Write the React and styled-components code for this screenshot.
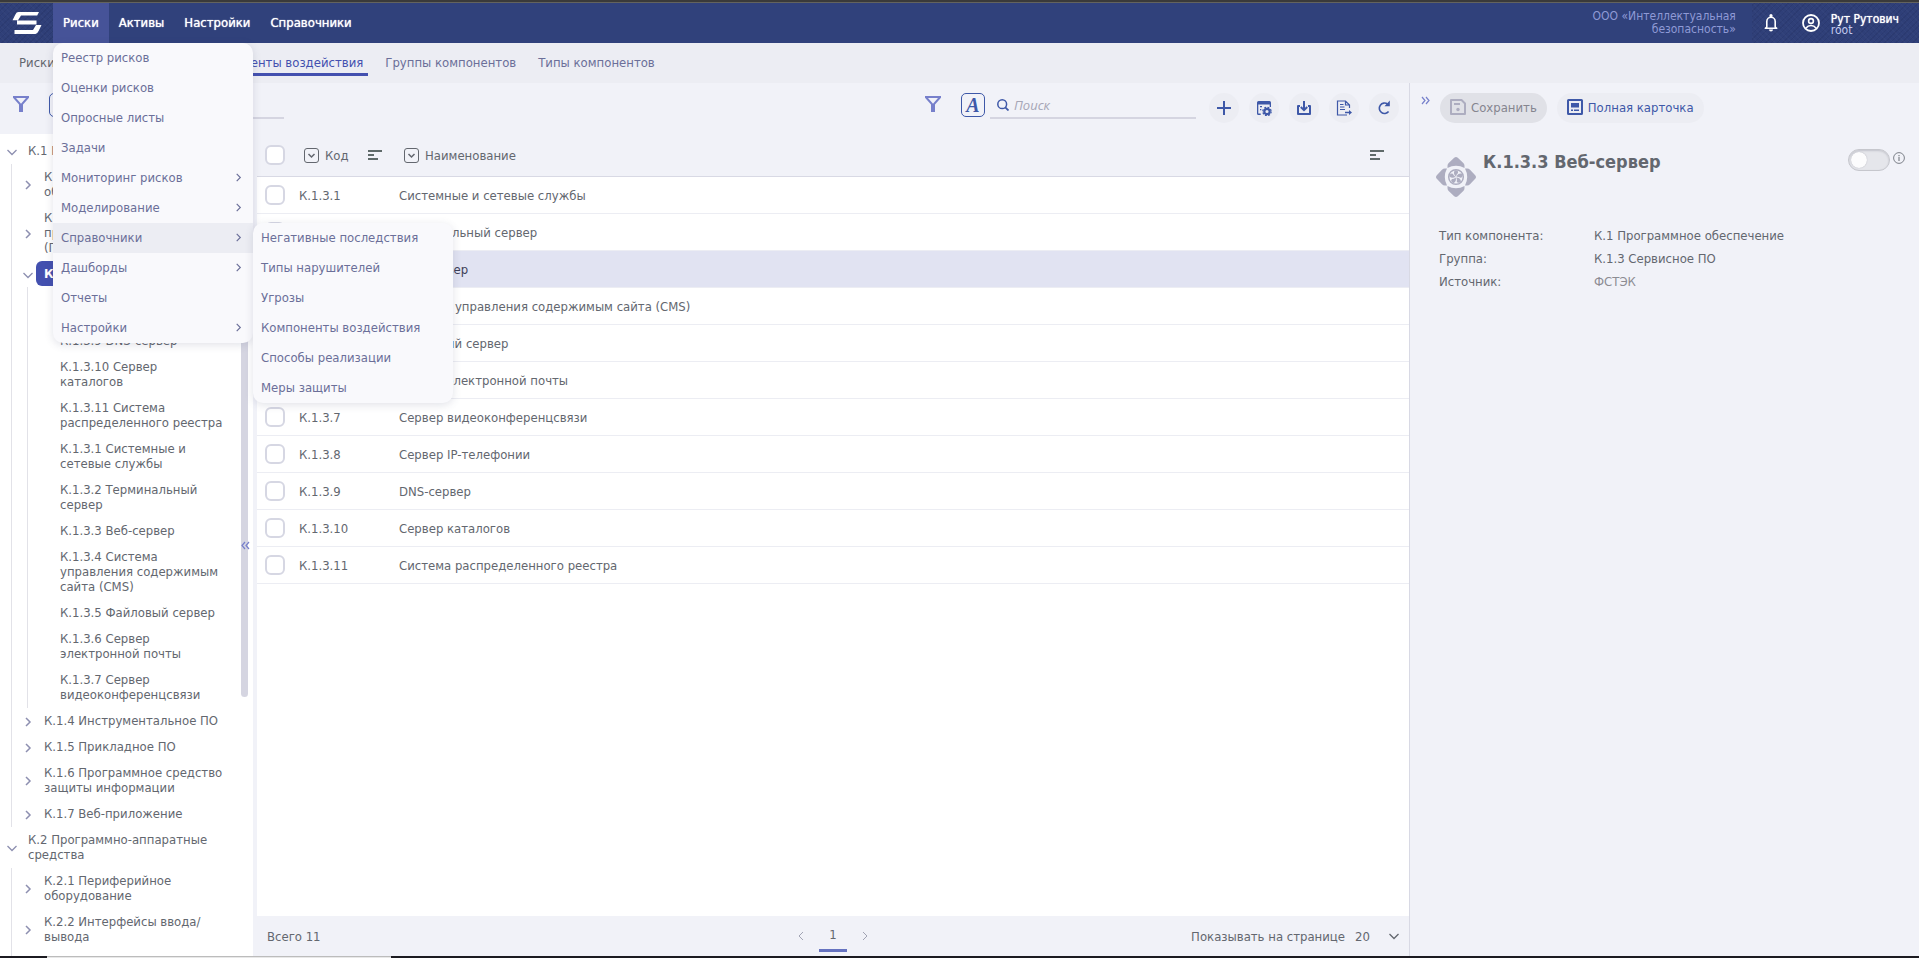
import React from 'react';
import styled, { createGlobalStyle, css } from 'styled-components';

const c = {
  header: '#30417b',
  headerActive: '#465398',
  panel: '#f1f2f8',
  bar: '#ecedf3',
  text: '#63676f',
  muted: '#6b6f99',
  accent: '#4350af',
  icon: '#3e58a8',
  soft: '#7780cb',
  line: '#d8d9e4',
};

const Global = createGlobalStyle`
  *, *::before, *::after { box-sizing: border-box; }
  body {
    margin: 0;
    font-family: "DejaVu Sans Condensed", "Liberation Sans", sans-serif;
    font-size: 13px;
    line-height: 15px;
    color: ${c.text};
    background: ${c.panel};
  }
  button, input, select { font: inherit; color: inherit; }
  ul, dl, dd, h1 { margin: 0; padding: 0; }
  ul { list-style: none; }
  a { color: inherit; text-decoration: none; }
`;

const Page = styled.div`
  display: flex;
  flex-direction: column;
  height: 100vh;
  overflow: hidden;
`;

const TopEdge = styled.div`
  flex: none;
  height: 3px;
  background: #3a3a3a;
  border-bottom: 1px solid #63635e;
`;

const BottomEdge = styled.div`
  flex: none;
  display: grid;
  grid-template-columns: 47px 344px 1fr;
  height: 2px;
  background: #1c1b21;
`;

const EdgeTab = styled.span`
  grid-column: 2;
  background: #e8e8e8;
  border-top: 1px solid #bcbcbc;
`;

/* ---------- header ---------- */

const pattern = css`
  background-color: #2f3f78;
  background-image:
    repeating-linear-gradient(45deg, rgba(255, 255, 255, 0.02) 0 1px, transparent 1px 4px),
    repeating-linear-gradient(-45deg, rgba(10, 15, 50, 0.1) 0 1px, transparent 1px 4px);
`;

const Header = styled.header`
  flex: none;
  display: flex;
  height: 40px;
  background: ${c.header};
  color: #fff;
`;

const Logo = styled.a`
  display: flex;
  align-items: center;
  justify-content: center;
  width: 53px;
  ${pattern}
`;

const Nav = styled.ul`
  display: flex;
  flex: 1;
`;

const NavItem = styled.li`
  position: relative;
  background: ${(p) => (p.$active ? c.headerActive : 'transparent')};
`;

const NavLink = styled.a`
  display: block;
  padding: 0 10px;
  line-height: 40px;
  text-shadow: 0 0 1px #fff;
`;

const Menu = styled.ul`
  position: absolute;
  z-index: 10;
  top: 100%;
  left: 0;
  width: 200px;
  background: #f9f9fc;
  border-radius: 10px;
  box-shadow: 0 2px 8px rgba(70, 75, 110, 0.16);
  color: ${c.muted};
`;

const SubMenu = styled(Menu)`
  top: 0;
  left: 100%;
`;

const MenuItem = styled.li`
  position: relative;
  background: ${(p) => (p.$open ? c.bar : 'transparent')};
`;

const MenuLink = styled.a`
  display: flex;
  align-items: center;
  justify-content: space-between;
  height: 30px;
  padding: 0 10px 2px 8px;
`;

const Org = styled.div`
  align-self: center;
  width: 160px;
  margin-right: 16px;
  font-size: 12px;
  line-height: 13px;
  text-align: right;
  color: #8f9ad6;
`;

const Account = styled.div`
  display: flex;
  align-items: center;
  padding: 0 20px 0 12px;
  ${pattern}
`;

const HeaderButton = styled.button`
  display: flex;
  padding: 0;
  margin-right: ${(p) => p.$gap}px;
  border: 0;
  background: none;
  color: #fff;
`;

const User = styled.div`
  padding-top: 4px;
  font-size: 12px;
  line-height: 11px;
  white-space: nowrap;
`;

const UserName = styled.div`
  text-shadow: 0 0 1px #fff;
`;

const UserLogin = styled.div`
  color: #c3caf0;
`;

/* ---------- tabs ---------- */

const TabBar = styled.nav`
  flex: none;
  display: flex;
  align-items: flex-start;
  gap: 12px;
  height: 40px;
  padding-left: 19px;
  background: ${c.bar};
`;

const Crumb = styled.a`
  width: 168px;
  padding-top: 10px;
  line-height: 20px;
`;

const Tab = styled.a`
  padding: 10px 5px 0;
  line-height: 20px;
  white-space: nowrap;
  color: ${(p) => (p.$active ? c.accent : c.muted)};
  border-bottom: 3px solid ${(p) => (p.$active ? c.accent : 'transparent')};
`;

/* ---------- body ---------- */

const Body = styled.div`
  flex: 1;
  display: flex;
  min-height: 0;
`;

const Sidebar = styled.aside`
  position: relative;
  z-index: 1;
  flex: none;
  display: flex;
  flex-direction: column;
  width: 253px;
`;

const Toolbar = styled.div`
  flex: none;
  display: flex;
  align-items: flex-start;
  justify-content: ${(p) => (p.$end ? 'flex-end' : 'flex-start')};
  height: 51px;
  padding: 10px 10px 0 9px;
  background: ${c.panel};
`;

const FilterButton = styled.button`
  flex: none;
  display: flex;
  align-items: center;
  justify-content: center;
  width: 24px;
  height: 22px;
  margin-right: 16px;
  padding: 0;
  border: 0;
  background: none;
  color: ${c.soft};
`;

const CaseButton = styled.button`
  flex: none;
  width: 24px;
  height: 24px;
  padding: 0;
  border: 1px solid ${c.icon};
  border-radius: 5px;
  background: none;
  color: ${c.icon};
  font: italic bold 20px/20px "Liberation Serif", serif;
`;

const SearchBox = styled.label`
  flex: none;
  display: flex;
  align-items: center;
  gap: 5px;
  width: 206px;
  height: 26px;
  margin-left: 5px;
  padding-left: 7px;
  border-bottom: 2px solid #d5d5e1;
  color: ${c.icon};
`;

const SearchInput = styled.input`
  flex: 1;
  min-width: 0;
  padding: 0;
  border: 0;
  outline: 0;
  background: none;
  font-family: "Open Sans", sans-serif;
  font-style: italic;
  &::placeholder { color: #a6a6b6; opacity: 1; }
`;

const Actions = styled.div`
  display: flex;
  gap: 10px;
  margin-left: 13px;
`;

const RoundButton = styled.button`
  display: flex;
  align-items: center;
  justify-content: center;
  width: 30px;
  height: 30px;
  padding: 0;
  border: 0;
  border-radius: 50%;
  background: ${c.bar};
  color: ${c.icon};
`;

const Tree = styled.ul`
  flex: 1;
  min-height: 0;
  overflow: hidden;
  padding: 4px 17px 0 0;
  background: #fff;
`;

const Branch = styled.ul`
  margin-left: 11px;
  padding-left: 4px;
  border-left: 1px solid #e2e2e8;
`;

const TreeRow = styled.div`
  display: flex;
  align-items: center;
  padding-bottom: 1px;
`;

const TreeToggle = styled.button`
  flex: none;
  display: flex;
  justify-content: center;
  width: 20px;
  padding: 2px 0 0 3px;
  border: 0;
  background: none;
  color: #8d8fb0;
`;

const TreeSpacer = styled.span`
  flex: none;
  width: 20px;
`;

const TreeLabel = styled.a`
  flex: 1;
  padding: 5px 8px;
  border-radius: 6px;
  white-space: pre-line;
  ${(p) => p.$selected && css`
    background: ${c.accent};
    color: #fff;
    font-weight: bold;
    white-space: nowrap;
  `}
`;

const Scrollbar = styled.span`
  position: absolute;
  top: 120px;
  right: 5px;
  width: 7px;
  height: 494px;
  border-radius: 4px;
  background: #d5d5e1;
`;

const CollapseButton = styled.button`
  position: absolute;
  top: 458px;
  right: 3px;
  display: flex;
  padding: 0;
  border: 0;
  background: none;
  color: ${c.soft};
`;

const Main = styled.main`
  flex: 1;
  display: flex;
  flex-direction: column;
  min-width: 0;
  padding-left: 4px;
  background: ${c.panel};
`;

const TableArea = styled.div`
  flex: 1;
  min-height: 0;
  overflow: hidden;
  background: #fff;
`;

const Table = styled.table`
  width: 100%;
  border-collapse: separate;
  border-spacing: 0;
  table-layout: fixed;
`;

const Col = styled.col`
  width: ${(p) => p.$w};
`;

const Th = styled.th`
  height: 43px;
  padding: 0 25px 0 5px;
  border-bottom: 1px solid ${c.line};
  background: ${c.panel};
  font-weight: normal;
  text-align: left;
`;

const HeadCell = styled.div`
  display: flex;
  align-items: center;
  gap: 6px;
`;

const SortButton = styled.button`
  display: flex;
  margin-left: auto;
  padding: 0;
  border: 0;
  background: none;
  color: #5f6a6a;
`;

const CodeTh = styled(Th)`
  padding-right: 17px;
`;

const Tr = styled.tr`
  background: ${(p) => (p.$selected ? '#e1e3f2' : '#fff')};
  color: ${(p) => (p.$selected ? '#3d4058' : 'inherit')};
`;

const Td = styled.td`
  height: 37px;
  padding: 0;
  border-bottom: 1px solid ${c.bar};
`;

const checkCell = css`
  padding: 0 0 0 8px;
  vertical-align: middle;
`;

const CheckTh = styled(Th)`
  ${checkCell}
`;

const CheckTd = styled(Td)`
  ${checkCell}
`;

const Check = styled.input.attrs({ type: 'checkbox' })`
  appearance: none;
  display: block;
  width: 20px;
  height: 20px;
  margin: 0;
  border: 2px solid #d6d7e3;
  border-radius: 6px;
  background: #fff;
`;

const Footer = styled.footer`
  flex: none;
  display: grid;
  grid-template-columns: 1fr auto 1fr;
  align-items: center;
  height: 40px;
  padding: 0 10px;
`;

const Pager = styled.nav`
  display: flex;
  align-items: center;
  gap: 13px;
`;

const PageStep = styled.button`
  display: flex;
  padding: 0;
  border: 0;
  background: none;
  color: #a2a4b4;
`;

const PageNumber = styled.button`
  width: 28px;
  height: 31px;
  padding: 0;
  border: 0;
  border-bottom: 3px solid #6673c0;
  background: none;
`;

const PageSize = styled.label`
  display: flex;
  align-items: center;
  justify-content: flex-end;
  gap: 10px;
`;

const SizeSelect = styled.select`
  appearance: none;
  width: 24px;
  padding: 0;
  border: 0;
  background: none;
`;

/* ---------- details ---------- */

const Details = styled.section`
  flex: none;
  width: 510px;
  padding: 10px 14px 0 11px;
  border-left: 1px solid ${c.line};
  background: ${c.panel};
`;

const DetailsBar = styled.div`
  display: flex;
  align-items: flex-start;
  gap: 10px;
`;

const ExpandButton = styled.button`
  display: flex;
  width: 9px;
  padding: 3px 0 0;
  border: 0;
  background: none;
  color: ${c.soft};
`;

const PillButton = styled.button`
  display: flex;
  align-items: center;
  gap: 5px;
  height: 30px;
  padding: 0 10px 2px;
  border: 0;
  border-radius: 15px;
  background: ${c.bar};
  color: ${c.icon};
  white-space: nowrap;
  &:disabled { background: #e0e1e7; color: #85858f; }
`;

const Card = styled.div`
  display: flex;
  align-items: flex-start;
  gap: 7px;
  padding: 26px 0 0 15px;
`;

const Emblem = styled.svg`
  flex: none;
  margin-top: 8px;
  color: #adadc0;
`;

const Title = styled.h1`
  flex: 1;
  padding-top: 2px;
  font-size: 18px;
  line-height: 22px;
`;

const SwitchBox = styled.div`
  display: flex;
  gap: 3px;
`;

const Switch = styled.input.attrs({ type: 'checkbox', role: 'switch' })`
  appearance: none;
  width: 42px;
  height: 22px;
  margin: 0;
  padding: 2px;
  border: 1px solid #c6c7cd;
  border-radius: 11px;
  background: #e5e6eb;
  box-shadow: inset 0 1px 2px rgba(60, 60, 80, 0.2);
  &::before {
    content: '';
    display: block;
    width: 16px;
    height: 16px;
    border-radius: 50%;
    background: #fcfcfd;
    box-shadow: 0 0 1px rgba(60, 60, 80, 0.4);
  }
`;

const Info = styled.button`
  display: flex;
  align-items: flex-start;
  padding: 3px 0 0;
  border: 0;
  background: none;
  color: #7d8189;
`;

const Fields = styled.dl`
  display: grid;
  grid-template-columns: 155px 1fr;
  row-gap: 8px;
  padding: 31px 0 0 18px;
`;

const FieldValue = styled.dd`
  color: ${(p) => (p.$muted ? '#8c8c93' : 'inherit')};
`;

/* ---------- icons ---------- */

const stroke = { fill: 'none', stroke: 'currentColor', strokeWidth: 1.5 };

const ChevronRight = ({ size = 10, weight = 1.5 }) => (
  <svg width={size} height={size} viewBox="0 0 10 10"><path d="M3 1l4 4-4 4" {...stroke} strokeWidth={weight} /></svg>
);
const ChevronLeft = () => (
  <svg width="10" height="10" viewBox="0 0 10 10"><path d="M7 1L3 5l4 4" {...stroke} strokeWidth="1" /></svg>
);
const ChevronDown = () => (
  <svg width="10" height="10" viewBox="0 0 10 10"><path d="M.5 3L5 7.500 9.500 3" {...stroke} strokeWidth="1.300" /></svg>
);
const Double = ({ right }) => (
  <svg width="9" height="9" viewBox="0 0 9 9">
    <path d={right ? 'M1 1l3 3.5L1 8M5 1l3 3.5L5 8' : 'M4 1L1 4.5 4 8M8 1L5 4.5 8 8'} {...stroke} strokeWidth="1.2" />
  </svg>
);
const Funnel = () => (
  <svg width="16" height="16" viewBox="0 0 16 16">
    <path fillRule="evenodd" fill="currentColor" d="M0 0h16v1.8L10 8.6V16H6V8.600L0 1.800zM3 2l5 5.800L13 2z" />
  </svg>
);
const Magnifier = () => (
  <svg width="12" height="12" viewBox="0 0 12 12">
    <circle cx="5.200" cy="5.200" r="4.400" {...stroke} strokeWidth="1.500" />
    <path d="M8.300 8.300l3.200 3.200" {...stroke} strokeWidth="1.800" />
  </svg>
);
const Sort = () => (
  <svg width="14" height="10" viewBox="0 0 14 10"><path fill="currentColor" d="M0 0h14v2H0zM0 4h6v2H0zM0 8h10v2H0z" /></svg>
);
const BoxDown = () => (
  <svg width="15" height="15" viewBox="0 0 15 15">
    <rect x=".5" y=".5" width="14" height="14" rx="2.500" {...stroke} strokeWidth="1" />
    <path d="M4.500 6l3 3 3-3" {...stroke} />
  </svg>
);
const Plus = () => (
  <svg width="14" height="14" viewBox="0 0 14 14"><path fill="currentColor" d="M6 0h2v6h6v2H8v6H6V8H0V6h6z" /></svg>
);
const TableGear = () => (
  <svg width="16" height="16" viewBox="0 0 16 16">
    <path fill="currentColor" d="M1 2.500Q1 1 2.500 1h11Q15 1 15 2.500V7h-1.300V4.500H2.300v9h2.400V15H2.500Q1 15 1 13.500zM4 6h2v1.300H4zM4 9h1.300v1.300H4z" />
    <circle cx="11" cy="11.500" r="2.700" {...stroke} strokeWidth="2.200" />
    <circle cx="11" cy="11.500" r="4.200" {...stroke} strokeWidth="1.200" strokeDasharray="1.900 1.400" />
  </svg>
);
const Download = () => (
  <svg width="16" height="16" viewBox="0 0 16 16">
    <path d="M8 1v9M4.800 7L8 10.200 11.200 7" {...stroke} strokeWidth="2" />
    <path d="M4 6H2v8h12V6h-2" {...stroke} strokeWidth="2" strokeLinejoin="round" />
  </svg>
);
const Export = () => (
  <svg width="16" height="16" viewBox="0 0 16 16">
    <path d="M13.500 8V5L9.500 1h-8v14H11M9.500 1v4h4M4 4.500h3.500M4 7h4.500M4 9.500h5" {...stroke} strokeWidth="1.200" />
    <path fill="currentColor" d="M9 11.800h4V10l3 2.500-3 2.500v-1.800H9z" />
  </svg>
);
const Refresh = () => (
  <svg width="16" height="16" viewBox="0 0 16 16">
    <path d="M11.500 4A5.200 5.200 0 1 0 12.600 11.500" {...stroke} strokeWidth="1.600" />
    <path fill="currentColor" d="M13.800.5v5.800H8.500z" />
  </svg>
);
const Save = () => (
  <svg width="16" height="16" viewBox="0 0 16 16">
    <path d="M1 1h10.500L15 4.500V15H1z" fill="none" stroke="#adadc0" strokeWidth="2" strokeLinejoin="round" />
    <path fill="#adadc0" d="M4 4h6v2H4z" />
    <circle cx="8" cy="10.500" r="1.700" fill="#adadc0" />
  </svg>
);
const CardIcon = () => (
  <svg width="16" height="16" viewBox="0 0 16 16">
    <rect x="1" y="1" width="14" height="14" rx=".5" {...stroke} strokeWidth="2" />
    <path fill="currentColor" d="M4 4h8v4.500H4zM4 10.500h2v1.500H4zM7 10.500h5v1.500H7z" />
  </svg>
);
const InfoIcon = () => (
  <svg width="12" height="12" viewBox="0 0 12 12">
    <circle cx="6" cy="6" r="5.400" {...stroke} strokeWidth="1" />
    <path d="M6 5v4M6 3v1.200" {...stroke} strokeWidth="1.200" />
  </svg>
);
const Bell = () => (
  <svg width="14" height="18" viewBox="0 0 14 18">
    <path d="M2.800 13V7.500a4.200 4.200 0 0 1 8.400 0V13l1.500 1.300H1.300z" {...stroke} strokeWidth="1.600" strokeLinejoin="round" />
    <circle cx="7" cy="1.700" r="1.600" fill="currentColor" />
    <path d="M5 15.500a2 2 0 0 0 4 0z" fill="currentColor" />
  </svg>
);
const UserIcon = () => (
  <svg width="18" height="18" viewBox="0 0 18 18">
    <circle cx="9" cy="9" r="8" {...stroke} strokeWidth="1.800" />
    <circle cx="9" cy="7" r="2.400" {...stroke} strokeWidth="1.600" />
    <path d="M3.800 14.200Q6 11.500 9 11.500T14.200 14.200" {...stroke} strokeWidth="1.600" />
  </svg>
);
const Mark = () => (
  <svg width="30" height="22" viewBox="0 0 30 22">
    <path fill="#fff" d="M6.500 0H27l-1.800 3.600H9L6 8.300H.5L3.400 2.400Q4.500 0 6.500 0zM5 8.600h19.500v4H5zM24 12.900h5.500l-2.900 6.200Q25.300 22 23.500 22H2.500v-4H21z" />
  </svg>
);

const Petal = 'M18.200.8Q20-.8 21.800.8L27.300 6Q28.500 7.200 28.500 8.800V11Q24.500 8.800 20 8.800T11.500 11V8.800Q11.500 7.200 12.700 6z';
const Fan = () => (
  <Emblem width="40" height="40" viewBox="0 0 40 40" aria-hidden="true">
    {[0, 90, 180, 270].map((r) => (
      <path key={r} d={Petal} fill="currentColor" transform={`rotate(${r} 20 20)`} />
    ))}
    <circle cx="20" cy="20" r="9.300" fill={c.panel} />
    <circle cx="20" cy="20" r="7.300" {...stroke} strokeWidth="1.500" />
    {[0, 72, 144, 216, 288].map((r) => (
      <path key={r} d="M20 19.500Q16.800 17 18.600 13.400Q22.600 13 22 16Q20.500 17.300 20 19.500z" fill="currentColor" transform={`rotate(${r} 20 20)`} />
    ))}
  </Emblem>
);

/* ---------- data ---------- */

const menu = [
  { t: 'Реестр рисков' },
  { t: 'Оценки рисков' },
  { t: 'Опросные листы' },
  { t: 'Задачи' },
  { t: 'Мониторинг рисков', more: true },
  { t: 'Моделирование', more: true },
  {
    t: 'Справочники',
    more: true,
    sub: ['Негативные последствия', 'Типы нарушителей', 'Угрозы', 'Компоненты воздействия', 'Способы реализации', 'Меры защиты'],
  },
  { t: 'Дашборды', more: true },
  { t: 'Отчеты' },
  { t: 'Настройки', more: true },
];

const tree = [
  {
    t: 'К.1 Программное обеспечение',
    kids: [
      { t: 'К.1.1 Аппаратное\nобеспечение', closed: true },
      { t: 'К.1.2 Системное программное обеспечение (ПО)', closed: true },
      {
        t: 'К.1.3 Сервисное ПО',
        selected: true,
        kids: [
          { t: 'К.1.3.8 Сервер\nIP-телефонии' },
          { t: 'К.1.3.9 DNS-сервер' },
          { t: 'К.1.3.10 Сервер\nкаталогов' },
          { t: 'К.1.3.11 Система распределенного реестра' },
          { t: 'К.1.3.1 Системные и сетевые службы' },
          { t: 'К.1.3.2 Терминальный сервер' },
          { t: 'К.1.3.3 Веб-сервер' },
          { t: 'К.1.3.4 Система управления содержимым сайта (CMS)' },
          { t: 'К.1.3.5 Файловый сервер' },
          { t: 'К.1.3.6 Сервер электронной почты' },
          { t: 'К.1.3.7 Сервер видеоконференцсвязи' },
        ],
      },
      { t: 'К.1.4 Инструментальное ПО', closed: true },
      { t: 'К.1.5 Прикладное ПО', closed: true },
      { t: 'К.1.6 Программное средство защиты информации', closed: true },
      { t: 'К.1.7 Веб-приложение', closed: true },
    ],
  },
  {
    t: 'К.2 Программно-аппаратные средства',
    kids: [
      { t: 'К.2.1 Периферийное оборудование', closed: true },
      { t: 'К.2.2 Интерфейсы ввода/вывода', closed: true },
      { t: 'К.2.3 Средства хранения', closed: true },
    ],
  },
];

const rows = [
  ['К.1.3.1', 'Системные и сетевые службы'],
  ['К.1.3.2', 'Терминальный сервер'],
  ['К.1.3.3', 'Веб-сервер'],
  ['К.1.3.4', 'Система управления содержимым сайта (CMS)'],
  ['К.1.3.5', 'Файловый сервер'],
  ['К.1.3.6', 'Сервер электронной почты'],
  ['К.1.3.7', 'Сервер видеоконференцсвязи'],
  ['К.1.3.8', 'Сервер IP-телефонии'],
  ['К.1.3.9', 'DNS-сервер'],
  ['К.1.3.10', 'Сервер каталогов'],
  ['К.1.3.11', 'Система распределенного реестра'],
];

const breakable = (t) =>
  t.split('/').map((part, i) => (i ? <React.Fragment key={i}>/<wbr />{part}</React.Fragment> : part));

function TreeNode({ node }) {
  return (
    <li>
      <TreeRow>
        {node.kids || node.closed ? (
          <TreeToggle aria-label={node.kids ? 'Свернуть' : 'Развернуть'}>
            {node.kids ? <ChevronDown /> : <ChevronRight />}
          </TreeToggle>
        ) : (
          <TreeSpacer />
        )}
        <TreeLabel href="#" $selected={node.selected}>{breakable(node.t)}</TreeLabel>
      </TreeRow>
      {node.kids && (
        <Branch>
          {node.kids.map((k) => <TreeNode key={k.t} node={k} />)}
        </Branch>
      )}
    </li>
  );
}

function SearchTools({ label }) {
  return (
    <>
      <FilterButton aria-label="Фильтр"><Funnel /></FilterButton>
      <CaseButton aria-label="Учитывать регистр">A</CaseButton>
      <SearchBox>
        <Magnifier />
        <SearchInput type="text" placeholder="Поиск" aria-label={label} />
      </SearchBox>
    </>
  );
}

export default function App() {
  return (
    <Page>
      <Global />
      <TopEdge />
      <Header>
        <Logo href="#" aria-label="На главную"><Mark /></Logo>
        <Nav>
          <NavItem $active>
            <NavLink href="#">Риски</NavLink>
            <Menu>
              {menu.map((m) => (
                <MenuItem key={m.t} $open={!!m.sub}>
                  <MenuLink href="#">{m.t}{m.more && <ChevronRight size={9} weight={1.3} />}</MenuLink>
                  {m.sub && (
                    <SubMenu>
                      {m.sub.map((s) => <MenuItem key={s}><MenuLink href="#">{s}</MenuLink></MenuItem>)}
                    </SubMenu>
                  )}
                </MenuItem>
              ))}
            </Menu>
          </NavItem>
          {['Активы', 'Настройки', 'Справочники'].map((t) => (
            <NavItem key={t}><NavLink href="#">{t}</NavLink></NavItem>
          ))}
        </Nav>
        <Org>ООО «Интеллектуальная безопасность»</Org>
        <Account>
          <HeaderButton $gap={24} aria-label="Уведомления"><Bell /></HeaderButton>
          <HeaderButton $gap={11} aria-label="Профиль"><UserIcon /></HeaderButton>
          <User>
            <UserName>Рут Рутович</UserName>
            <UserLogin>root</UserLogin>
          </User>
        </Account>
      </Header>
      <TabBar>
        <Crumb href="#">Риски</Crumb>
        <Tab href="#" $active>Компоненты воздействия</Tab>
        <Tab href="#">Группы компонентов</Tab>
        <Tab href="#">Типы компонентов</Tab>
      </TabBar>
      <Body>
        <Sidebar>
          <Toolbar><SearchTools label="Поиск по дереву" /></Toolbar>
          <Tree>
            {tree.map((n) => <TreeNode key={n.t} node={n} />)}
          </Tree>
          <Scrollbar />
          <CollapseButton aria-label="Свернуть дерево"><Double /></CollapseButton>
        </Sidebar>
        <Main>
          <Toolbar $end>
            <SearchTools label="Поиск по таблице" />
            <Actions>
              <RoundButton aria-label="Добавить"><Plus /></RoundButton>
              <RoundButton aria-label="Настроить таблицу"><TableGear /></RoundButton>
              <RoundButton aria-label="Загрузить"><Download /></RoundButton>
              <RoundButton aria-label="Экспорт"><Export /></RoundButton>
              <RoundButton aria-label="Обновить"><Refresh /></RoundButton>
            </Actions>
          </Toolbar>
          <TableArea>
            <Table>
              <colgroup><Col $w="42px" /><Col $w="100px" /><Col $w="auto" /></colgroup>
              <thead>
                <tr>
                  <CheckTh><Check aria-label="Выбрать все" /></CheckTh>
                  <CodeTh>
                    <HeadCell><BoxDown />Код<SortButton aria-label="Сортировать по коду"><Sort /></SortButton></HeadCell>
                  </CodeTh>
                  <Th>
                    <HeadCell><BoxDown />Наименование<SortButton aria-label="Сортировать по наименованию"><Sort /></SortButton></HeadCell>
                  </Th>
                </tr>
              </thead>
              <tbody>
                {rows.map(([code, name]) => (
                  <Tr key={code} $selected={code === 'К.1.3.3'}>
                    <CheckTd><Check aria-label={code} /></CheckTd>
                    <Td>{code}</Td>
                    <Td>{name}</Td>
                  </Tr>
                ))}
              </tbody>
            </Table>
          </TableArea>
          <Footer>
            <span>Всего 11</span>
            <Pager>
              <PageStep aria-label="Назад"><ChevronLeft /></PageStep>
              <PageNumber>1</PageNumber>
              <PageStep aria-label="Вперед"><ChevronRight weight={1} /></PageStep>
            </Pager>
            <PageSize>
              Показывать на странице
              <SizeSelect defaultValue="20"><option>20</option><option>50</option></SizeSelect>
              <ChevronDown />
            </PageSize>
          </Footer>
        </Main>
        <Details>
          <DetailsBar>
            <ExpandButton aria-label="Свернуть карточку"><Double right /></ExpandButton>
            <PillButton disabled><Save />Сохранить</PillButton>
            <PillButton><CardIcon />Полная карточка</PillButton>
          </DetailsBar>
          <Card>
            <Fan />
            <Title>К.1.3.3 Веб-сервер</Title>
            <SwitchBox>
              <Switch aria-label="Использовать компонент" />
              <Info aria-label="Справка"><InfoIcon /></Info>
            </SwitchBox>
          </Card>
          <Fields>
            <dt>Тип компонента:</dt><FieldValue>К.1 Программное обеспечение</FieldValue>
            <dt>Группа:</dt><FieldValue>К.1.3 Сервисное ПО</FieldValue>
            <dt>Источник:</dt><FieldValue $muted>ФСТЭК</FieldValue>
          </Fields>
        </Details>
      </Body>
      <BottomEdge><EdgeTab /></BottomEdge>
    </Page>
  );
}
